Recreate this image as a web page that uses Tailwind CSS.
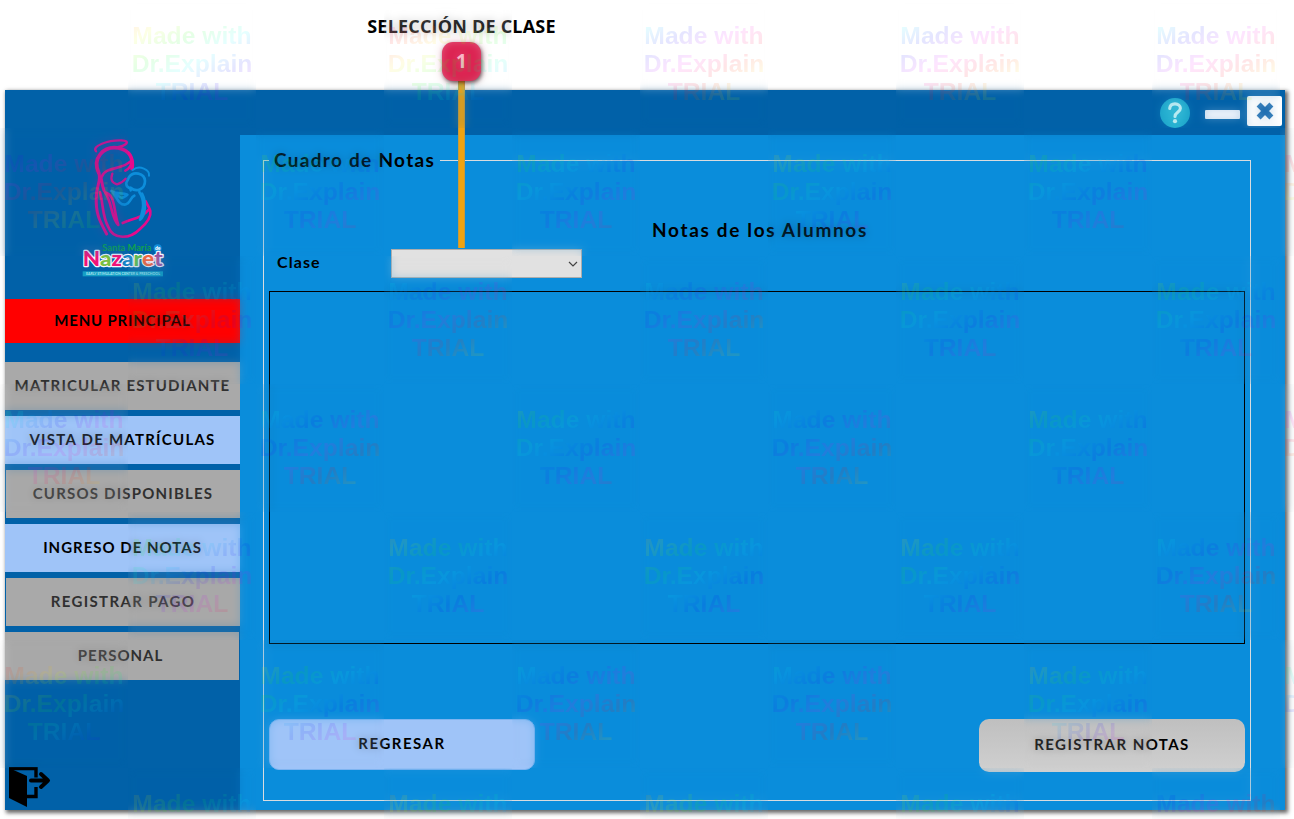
<!DOCTYPE html>
<html lang="es">
<head>
<meta charset="utf-8">
<title>Cuadro de Notas</title>
<script src="https://cdn.jsdelivr.net/npm/@tailwindcss/browser@4"></script>
</head>
<body class="relative w-[1294px] h-[819px] overflow-hidden bg-white text-black font-['Lato',sans-serif]">
<main class="pt-[90px] pl-[5px]">
  <div class="w-[1280px] h-[720px] flex flex-col bg-[#0a8ddb] shadow-[2px_2px_4px_1px_rgba(0,0,0,0.6)]">
    <header class="h-[45px] shrink-0 bg-[#0161a8] flex items-start justify-end pr-[3px]">
      <svg class="w-[30px] h-[30px] mt-2" viewBox="0 0 30 30"><circle cx="15" cy="15" r="15" fill="#24b1d1"/><path d="M9.700 10.500C10 7.200 12 5.900 15 5.900c3.200 0 5.400 1.700 5.400 4.400 0 4.100-5.400 4-5.400 8.200" fill="none" stroke="#d9f6f8" stroke-width="3.100" stroke-linecap="round"/><circle cx="15" cy="23.200" r="2.100" fill="#d9f6f8"/></svg>
      <div class="w-[35px] h-[9px] rounded-[1px] bg-[#f8faff] ml-[15px] mt-5"></div>
      <div class="w-[35px] h-[30px] rounded-[2px] bg-[#ffffff] ml-[7px] mt-1.5 flex items-center justify-center">
        <svg class="w-[18px] h-[18px]" viewBox="0 0 18 18"><path d="M2.600 2.600l12.800 12.800M15.400 2.600L2.600 15.400" stroke="#0f65ac" stroke-width="5.600"/></svg>
      </div>
    </header>
    <div class="flex grow">
      <nav class="w-[235px] shrink-0 bg-[#0161a8] flex flex-col text-[15px] font-bold leading-none whitespace-nowrap">
        <svg class="w-[110px] h-[145px] ml-[65px] shrink-0" viewBox="0 15 330 435">
          <g fill="none" stroke="#e50a8c" stroke-linecap="round" stroke-linejoin="round">
            <path d="M78 64c-14-16 36-34 76-33 32 2 12 17-14 21" stroke-width="7"/>
            <path d="M86 128C66 85 100 47 145 54c34 7 46 31 41 62" stroke-width="11"/>
            <path d="M96 139c10-30 64-18 90-49-1 16-8 26-20 32" stroke-width="8"/>
            <path d="M86 128c9 22-6 36-7 71-3 50 10 75 31 113M93 142c3 16 4 27 9 39" stroke-width="9"/>
            <path d="M127 131c-6 18-2 27 14 32 12-3 20-9 26-17" stroke-width="7"/>
            <path d="M90 187c10 34 6 70 25 104 15 40 66 36 95 6 21-18 34-37 31-54-3-12-10-19-14-29" stroke-width="8"/>
            <path d="M105 187c32 7 25 56 40 98-22-20-18-68-40-98M158 279c27-13 55-12 79-41" stroke-width="8"/>
          </g>
          <g fill="none" stroke="#0d8edb" stroke-linecap="round" stroke-linejoin="round">
            <path d="M188 120c21-17 52 0 49 17" stroke-width="6"/>
            <path d="M176 143c13-22 48-14 49 10 0 26-27 35-43 20M176 143c-2 8-9 13-7 19 0 14 15 9 13 19" stroke-width="8"/>
            <path d="M124 183c18 12 32 3 48 11-25 20-20 3-43-6 15 19 17 36 35 36 19-3 16-22 29-27" stroke-width="8"/>
            <path d="M208 186c18 28 12 52 2 83 15-11 21-50 6-78" stroke-width="8"/>
          </g>
          <text x="97" y="362" textLength="147" lengthAdjust="spacingAndGlyphs" font-size="27" font-weight="700" fill="#10a050">Santa María</text>
          <circle cx="263" cy="355" r="12" fill="#138edb"/>
          <text x="255" y="361" font-size="15" font-weight="900" fill="#fff">de</text>
          <text x="38" y="409" textLength="240" lengthAdjust="spacingAndGlyphs" font-size="62" font-weight="900" stroke="#f4f4ff" stroke-width="7" paint-order="stroke" stroke-linejoin="round"><tspan fill="#ee1379">N</tspan><tspan fill="#79be43">a</tspan><tspan fill="#ee1379">z</tspan><tspan fill="#1682c5">a</tspan><tspan fill="#58b948">r</tspan><tspan fill="#f05e38">e</tspan><tspan fill="#994f9e">t</tspan></text>
          <rect x="38" y="424" width="241" height="15" fill="#159fc5"/>
          <text x="48" y="435.500" textLength="222" lengthAdjust="spacingAndGlyphs" font-size="11" font-weight="700" fill="#a8e4ee">EARLY STIMULATION CENTER &amp; PRESCHOOL</text>
        </svg>
        <div class="mt-[19px] h-11 pb-0.5 bg-[#ff0000] flex items-center justify-center tracking-[0.8px]">MENU PRINCIPAL</div>
        <div class="mt-[19px] flex flex-col gap-1.5">
          <div class="h-12 pb-0.5 bg-[#a9a9a9] text-[#303030] flex items-center justify-center tracking-[1.15px]">MATRICULAR ESTUDIANTE</div>
          <div class="h-12 pb-0.5 bg-[#9fc4f8] flex items-center justify-center tracking-[1.25px]">VISTA DE MATRÍCULAS</div>
          <div class="h-12 pb-0.5 ml-px bg-[#a9a9a9] text-[#303030] flex items-center justify-center tracking-[1.2px]">CURSOS DISPONIBLES</div>
          <div class="h-12 pb-0.5 bg-[#9fc4f8] flex items-center justify-center tracking-[1px]">INGRESO DE NOTAS</div>
          <div class="h-12 pb-0.5 ml-px bg-[#a9a9a9] text-[#303030] flex items-center justify-center tracking-[1.35px]">REGISTRAR PAGO</div>
          <div class="h-12 pb-0.5 pr-[3px] mr-px bg-[#a9a9a9] text-[#303030] flex items-center justify-center tracking-[0.95px]">PERSONAL</div>
        </div>
        <svg class="w-[42px] h-10 mt-auto mb-[3px] ml-1" viewBox="0 0 42 40"><path d="M0 1.500h27v9M27 20v9.500H17" fill="none" stroke="#000" stroke-width="3.400"/><path d="M0 1l18 8v31L0 31z"/><path d="M22 13.500h15M32 7l7 6.500-7 6.500" fill="none" stroke="#000" stroke-width="4" stroke-linecap="round" stroke-linejoin="round"/></svg>
      </nav>
      <section class="grow pt-[13px] pl-[23px] pr-[34px]">
        <fieldset class="h-[653px] min-w-0 border border-[#d9dcdf] pl-[5px] pr-[5px] flex flex-col">
          <legend class="h-[25px] px-[5px] leading-[24px] text-[19px] font-bold tracking-[1.3px]">Cuadro de Notas</legend>
          <h1 class="mt-[43px] pl-[6px] text-center text-[19px] font-bold leading-[28px] tracking-[1.65px]">Notas de los Alumnos</h1>
          <div class="mt-[5px] pl-2 h-[29px] flex items-center">
            <span class="w-[114px] pb-[3px] text-[16px] font-bold leading-none tracking-[1.1px]">Clase</span>
            <div class="w-[191px] h-[29px] bg-[#e1e1e1] border border-[#adadad] flex items-center justify-end pr-[3px]">
              <svg class="w-[10px] h-[6px]" viewBox="0 0 10 6"><path d="M1 1l4 4 4-4" fill="none" stroke="#444" stroke-width="1.200"/></svg>
            </div>
          </div>
          <div class="mt-[13px] h-[353px] w-[976px] border border-black"></div>
          <div class="mt-[75px] w-[976px] flex justify-between items-start text-[15px] font-bold leading-none">
            <div class="w-[266px] h-[51px] pb-0.5 rounded-[10px] bg-[#9fc4f8] border border-[#7db4f1] flex items-center justify-center tracking-[1.5px]">REGRESAR</div>
            <div class="w-[266px] h-[53px] pb-0.5 rounded-[10px] bg-linear-to-b from-[#bfbfbf] to-[#d0d0d0] flex items-center justify-center tracking-[1.45px]">REGISTRAR NOTAS</div>
          </div>
        </fieldset>
      </section>
    </div>
  </div>
</main>

<div class="absolute left-[361px] top-[14px] w-[201px] flex flex-col items-center">
  <div class="h-[28px] leading-[24px] text-[18px] font-bold tracking-[0.2px] font-['Open_Sans',sans-serif] whitespace-nowrap">SELECCIÓN DE CLASE</div>
  <div class="relative w-[39px] h-[39px] rounded-[11px] bg-[#dc2352] shadow-[1px_2px_4px_rgba(0,0,0,0.7)] flex items-center justify-center text-[#ffd9e2] text-[19px] font-bold font-['Open_Sans',sans-serif] leading-none">1</div>
  <div class="w-[7px] h-[167px] bg-[#f0a310] border-x border-[#c79a3c]"></div>
</div>

<div id="marks" class="absolute inset-0 overflow-hidden pointer-events-none"></div>
<script>
// Trial watermark: x, y and hue of the first letter.
const tiles = [
  [128,0,55],[384,0,345],[640,0,200],[896,0,200],[1152,0,200],
  [0,128,250],[256,128,100],[512,128,105],[768,128,65],[1024,128,105],[1280,128,345],
  [128,256,75],[384,256,190],[640,256,190],[896,256,95],[1152,256,95],
  [0,384,170],[256,384,175],[512,384,100],[768,384,180],[1024,384,95],[1280,384,300],
  [128,512,110],[384,512,60],[640,512,60],[896,512,70],[1152,512,180],
  [0,640,10],[256,640,80],[512,640,180],[768,640,180],[1024,640,65],[1280,640,160],
  [128,768,60],[384,768,50],[640,768,50],[896,768,85],[1152,768,230]
];
document.getElementById('marks').innerHTML = tiles.map(([x, y, h]) => {
  const stops = Array.from({length: 15}, (_, i) => `hsl(${h - 75 + i * 400 / 14} 100% 50%)`).join(',');
  return `<div class="absolute w-32 h-32 overflow-hidden" style="left:${x}px;top:${y}px">
    <div class="absolute inset-0 backdrop-blur-[4px] opacity-25"></div>
    <div class="absolute inset-0 pt-[22px] text-center whitespace-nowrap font-['Liberation_Sans',sans-serif] font-bold text-[24.700px] leading-[28px] text-transparent bg-clip-text opacity-10" style="background-image:linear-gradient(149deg,${stops})">Made with<br>Dr.Explain<br>TRIAL</div></div>`;
}).join('');
</script>
</body>
</html>
